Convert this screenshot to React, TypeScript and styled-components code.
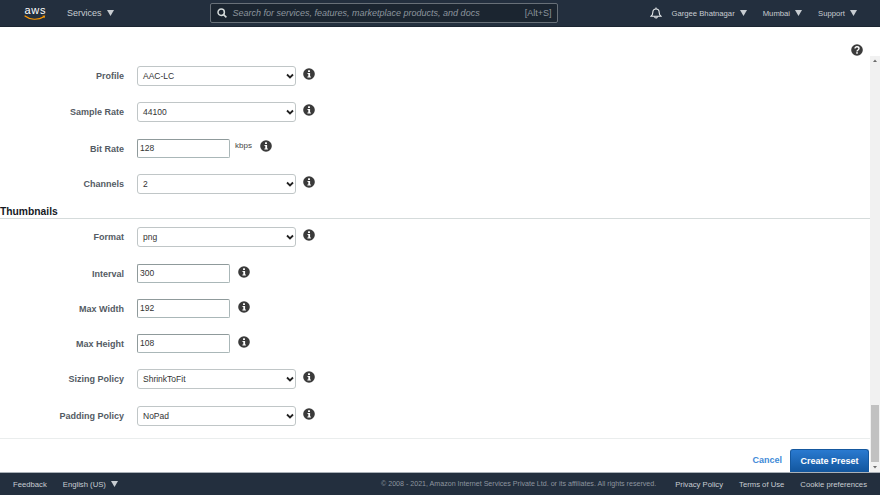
import React from "react";
import styled, { createGlobalStyle } from "styled-components";

const GlobalStyle = createGlobalStyle`
  html, body {
    margin: 0;
    padding: 0;
    height: 100%;
    overflow: hidden;
    background: #fff;
    font-family: "Liberation Sans", Arial, sans-serif;
  }
  #root {
    height: 100%;
  }
  * {
    box-sizing: border-box;
  }
`;

const Page = styled.div`
  width: 880px;
  height: 495px;
  display: flex;
  flex-direction: column;
`;

const TopBar = styled.header`
  height: 27px;
  flex: none;
  background: #232f3e;
  border-bottom: 1px solid #1b2531;
  display: flex;
  align-items: center;
  color: #d5dbdb;
`;

const LogoLink = styled.a`
  display: flex;
  width: 22px;
  margin-left: 24px;
  margin-right: 21px;
`;

const NavItem = styled.span<{ $size?: number }>`
  display: flex;
  align-items: center;
  gap: 5px;
  font-size: ${({ $size }) => $size ?? 7.7}px;
  color: #c8cdd2;
  white-space: nowrap;
`;

const SearchBox = styled.div`
  width: 348px;
  height: 20px;
  margin-left: 96px;
  border: 1px solid #687078;
  border-radius: 2px;
  background: #1b2530;
  display: flex;
  align-items: center;
  padding: 0 5px 0 6px;
  gap: 6px;
  font-size: 9px;
  color: #8d959e;
`;

const SearchText = styled.span`
  flex: 1;
  font-style: italic;
  white-space: nowrap;
`;

const RightNav = styled.div`
  margin-left: auto;
  margin-right: 23px;
  display: flex;
  align-items: center;
  gap: 16px;
`;

const BellWrap = styled.span`
  display: flex;
  margin-right: -7px;
`;

const Caret = styled.svg`
  width: 7px;
  height: 6px;
  fill: currentColor;
  flex: none;
`;

const Main = styled.main`
  flex: 1;
  min-height: 0;
  display: flex;
  position: relative;
`;

const Column = styled.div`
  flex: 1;
  min-width: 0;
  display: flex;
  flex-direction: column;
`;

const HelpButton = styled.span`
  position: absolute;
  top: 17px;
  right: 17px;
  display: flex;
  color: #3b3b3b;
`;

const Form = styled.div`
  flex: 1;
  min-height: 0;
  padding-top: 39px;
`;

const Row = styled.div<{ $height?: number }>`
  height: ${({ $height }) => $height ?? 36}px;
  display: flex;
  align-items: flex-start;
`;

const Label = styled.label<{ $top?: number }>`
  width: 124px;
  margin-right: 13px;
  padding-top: ${({ $top }) => $top ?? 4}px;
  text-align: right;
  font-size: 9px;
  line-height: 12px;
  font-weight: 700;
  color: #545b64;
  white-space: nowrap;
`;

const Select = styled.div`
  width: 159px;
  height: 20px;
  border: 1px solid #c0c6c7;
  border-radius: 3px;
  background: #fff;
  display: flex;
  align-items: center;
  justify-content: space-between;
  padding: 0 1px 0 5px;
  font-size: 8.5px;
  color: #333;
`;

const Chevron = styled.svg`
  width: 8px;
  height: 6px;
  fill: none;
  stroke: #222;
  stroke-width: 1.8;
`;

const TextInput = styled.div`
  width: 93px;
  height: 19px;
  margin-top: 1px;
  border: 1px solid #aab7b8;
  border-top-color: #8f9a9b;
  border-left-color: #8f9a9b;
  border-radius: 2px;
  background: #fff;
  padding-left: 2px;
  font-size: 8.5px;
  line-height: 17px;
  color: #333;
`;

const Unit = styled.span`
  margin-left: 5px;
  margin-top: 2px;
  font-size: 8px;
  line-height: 11px;
  color: #444;
`;

const InfoSlot = styled.span<{ $left: number; $top: number }>`
  display: flex;
  margin-left: ${({ $left }) => $left}px;
  margin-top: ${({ $top }) => $top}px;
  color: #3a3a3a;
`;

const SectionHeading = styled.h3`
  margin: -5px 0 8px;
  height: 14px;
  border-bottom: 1px solid #d5dbdb;
  font-size: 10.3px;
  line-height: 13px;
  font-weight: 700;
  color: #16191f;
`;

const Actions = styled.div`
  height: 34px;
  flex: none;
  border-top: 1px solid #eaeded;
  display: flex;
  align-items: flex-end;
  justify-content: flex-end;
  gap: 8px;
  padding-right: 1px;
`;

const CancelLink = styled.a`
  font-size: 9px;
  font-weight: 700;
  line-height: 12px;
  color: #3f8ad8;
  margin-bottom: 6px;
`;

const PrimaryButton = styled.button`
  width: 79px;
  height: 23px;
  border: 1px solid #15589f;
  border-bottom: none;
  border-radius: 3px 3px 0 0;
  background: linear-gradient(#2a7ad0, #12569e);
  color: #fff;
  font: 700 9px "Liberation Sans", Arial, sans-serif;
  padding: 0;
`;

const Scrollbar = styled.div`
  width: 10px;
  flex: none;
  margin-top: 29px;
  background: #f1f1f1;
  display: flex;
  flex-direction: column;
  align-items: center;
`;

const ScrollArrow = styled.svg`
  width: 10px;
  height: 10px;
  flex: none;
  fill: #6b6b6b;
`;

const ScrollTrack = styled.div`
  flex: 1;
  width: 100%;
  display: flex;
  flex-direction: column;
  justify-content: flex-end;
  align-items: flex-end;
  padding-right: 1px;
`;

const ScrollThumb = styled.div`
  width: 8px;
  height: 57px;
  background: #c1c1c1;
`;

const BottomBar = styled.footer`
  height: 23px;
  flex: none;
  background: #232f3e;
  border-top: 1px solid #aab1b8;
  display: flex;
  align-items: center;
  padding: 0 13px;
  font-size: 7.7px;
  color: #c8cdd2;
`;

const Language = styled(NavItem)`
  margin-left: 16px;
`;

const Legal = styled.span`
  margin-left: auto;
  margin-right: 3px;
  font-size: 7.1px;
  color: #8d959e;
`;

const BottomLink = styled.a`
  margin-left: 16px;
  white-space: nowrap;
`;

const Down = () => (
  <Caret viewBox="0 0 7 6">
    <path d="M0 0h7L3.500 6z" />
  </Caret>
);

const InfoIcon = () => (
  <svg width="12" height="12" viewBox="0 0 12 12">
    <circle cx="6" cy="6" r="5.8" fill="currentColor" />
    <rect x="5" y="2.2" width="2" height="1.8" rx=".5" fill="#fff" />
    <path d="M4.500 5h2.600v3.600h.8v1H4.400v-1h.9V6h-.8z" fill="#fff" />
  </svg>
);

const Field = ({ label, value, height }: { label: string; value: string; height?: number }) => (
  <Row $height={height}>
    <Label>{label}</Label>
    <Select>
      {value}
      <Chevron viewBox="0 0 8 6">
        <path d="M1 1.500l3 3 3-3" />
      </Chevron>
    </Select>
    <InfoSlot $left={7} $top={2}>
      <InfoIcon />
    </InfoSlot>
  </Row>
);

const NumberField = ({ label, value, unit, height }: { label: string; value: string; unit?: string; height?: number }) => (
  <Row $height={height}>
    <Label $top={5}>{label}</Label>
    <TextInput>{value}</TextInput>
    {unit && <Unit>{unit}</Unit>}
    <InfoSlot $left={8} $top={unit ? 2 : 3}>
      <InfoIcon />
    </InfoSlot>
  </Row>
);

export default function App() {
  return (
    <Page>
      <GlobalStyle />
      <TopBar>
        <LogoLink>
          <svg width="22" height="20" viewBox="0 0 22 20">
            <text x="0.5" y="10.5" fontFamily="Liberation Sans, Arial, sans-serif" fontSize="11" fontWeight="400" fill="#fff" textLength="21">
              aws
            </text>
            <path d="M1 13c5 4 13 4.400 19 .8" fill="none" stroke="#f90" strokeWidth="1.2" strokeLinecap="round" />
            <path d="M18.200 12.800l3-.4-.8 2.800z" fill="#f90" />
          </svg>
        </LogoLink>
        <NavItem $size={9}>
          Services <Down />
        </NavItem>
        <SearchBox>
          <svg width="10" height="10" viewBox="0 0 10 10" fill="none" stroke="#d5dbdb" strokeWidth="1.5">
            <circle cx="4.200" cy="4.200" r="3.200" />
            <path d="M6.600 6.600L9.400 9.400" />
          </svg>
          <SearchText>Search for services, features, marketplace products, and docs</SearchText>
          <span>[Alt+S]</span>
        </SearchBox>
        <RightNav>
          <BellWrap>
            <svg width="12" height="12" viewBox="0 0 12 12" fill="none" stroke="#e6e9eb" strokeWidth="1.1">
              <path d="M1 9.300c1.300-1 1.800-2 1.800-3.800C2.800 3.400 4 2 6 2s3.200 1.400 3.200 3.500c0 1.800.5 2.800 1.800 3.800z" />
              <path d="M6 .6V2M4.600 9.600c0 1.900 2.800 1.900 2.800 0" />
            </svg>
          </BellWrap>
          <NavItem>
            Gargee Bhatnagar <Down />
          </NavItem>
          <NavItem>
            Mumbai <Down />
          </NavItem>
          <NavItem>
            Support <Down />
          </NavItem>
        </RightNav>
      </TopBar>
      <Main>
        <HelpButton>
          <svg width="12" height="12" viewBox="0 0 12 12">
            <circle cx="6" cy="6" r="5.800" fill="currentColor" />
            <path d="M4 4.600C4 3.400 4.900 2.800 6 2.800s2 .7 2 1.700c0 1.500-2 1.500-2 3" fill="none" stroke="#fff" strokeWidth="1.400" />
            <rect x="5.200" y="8.200" width="1.600" height="1.500" fill="#fff" />
          </svg>
        </HelpButton>
        <Column>
          <Form>
            <Field label="Profile" value="AAC-LC" />
            <Field label="Sample Rate" value="44100" />
            <NumberField label="Bit Rate" value="128" unit="kbps" />
            <Field label="Channels" value="2" />
            <SectionHeading>Thumbnails</SectionHeading>
            <Field label="Format" value="png" />
            <NumberField label="Interval" value="300" height={35} />
            <NumberField label="Max Width" value="192" height={35} />
            <NumberField label="Max Height" value="108" />
            <Field label="Sizing Policy" value="ShrinkToFit" height={37} />
            <Field label="Padding Policy" value="NoPad" height={32} />
          </Form>
          <Actions>
            <CancelLink>Cancel</CancelLink>
            <PrimaryButton>Create Preset</PrimaryButton>
          </Actions>
        </Column>
        <Scrollbar>
          <ScrollArrow viewBox="0 0 10 10">
            <path d="M3 6l2-2.500L7 6z" />
          </ScrollArrow>
          <ScrollTrack>
            <ScrollThumb />
          </ScrollTrack>
          <ScrollArrow viewBox="0 0 10 10">
            <path d="M3 4l2 2.500L7 4z" />
          </ScrollArrow>
        </Scrollbar>
      </Main>
      <BottomBar>
        <span>Feedback</span>
        <Language>
          English (US) <Down />
        </Language>
        <Legal>© 2008 - 2021, Amazon Internet Services Private Ltd. or its affiliates. All rights reserved.</Legal>
        <BottomLink>Privacy Policy</BottomLink>
        <BottomLink>Terms of Use</BottomLink>
        <BottomLink>Cookie preferences</BottomLink>
      </BottomBar>
    </Page>
  );
}
